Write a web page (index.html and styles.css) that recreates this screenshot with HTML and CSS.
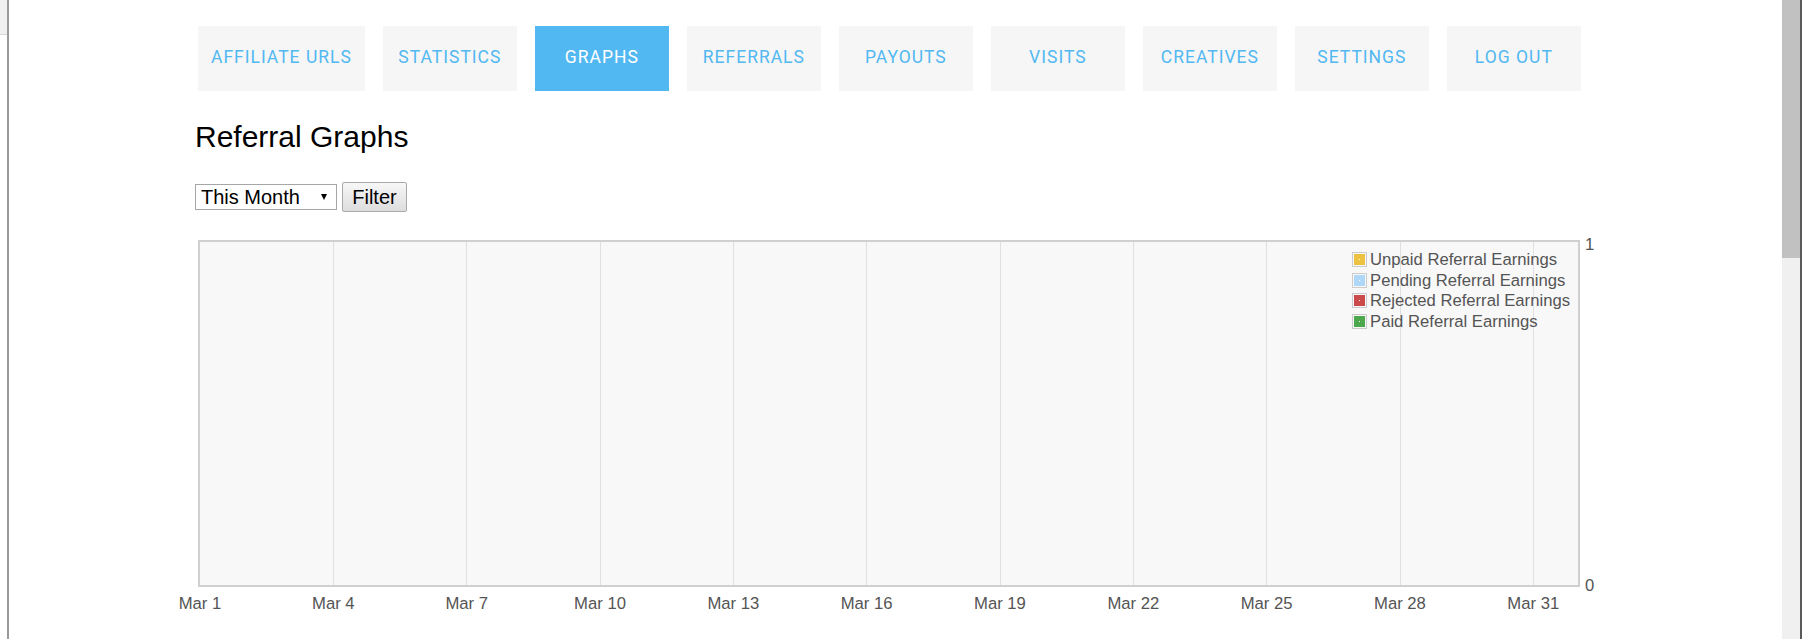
FILE: index.html
```html
<!DOCTYPE html>
<html lang="en">
<head>
<meta charset="utf-8">
<title>Referral Graphs</title>
<link rel="stylesheet" href="styles.css">
</head>
<body>
<div class="frame-left"><div class="frame-left-top"></div></div>
<main class="page">
  <nav class="tabs">
    <a class="tab" href="#">Affiliate URLs</a>
    <a class="tab" href="#">Statistics</a>
    <a class="tab tab-active" href="#">Graphs</a>
    <a class="tab" href="#">Referrals</a>
    <a class="tab" href="#">Payouts</a>
    <a class="tab" href="#">Visits</a>
    <a class="tab" href="#">Creatives</a>
    <a class="tab" href="#">Settings</a>
    <a class="tab" href="#">Log out</a>
  </nav>

  <h2 class="title">Referral Graphs</h2>

  <form class="filter">
    <span class="select-wrap">
      <select class="range">
        <option>This Month</option>
        <option>Last Month</option>
        <option>This Year</option>
      </select>
    </span>
    <button class="filter-btn" type="button">Filter</button>
  </form>

  <section class="chart">
    <div class="chart-row">
      <div class="plot">
        <svg class="grid" width="1378" height="343" viewBox="0 0 1378 343">
          <line x1="133.5" y1="0" x2="133.5" y2="343"/>
          <line x1="266.5" y1="0" x2="266.5" y2="343"/>
          <line x1="400.5" y1="0" x2="400.5" y2="343"/>
          <line x1="533.5" y1="0" x2="533.5" y2="343"/>
          <line x1="666.5" y1="0" x2="666.5" y2="343"/>
          <line x1="800.5" y1="0" x2="800.5" y2="343"/>
          <line x1="933.5" y1="0" x2="933.5" y2="343"/>
          <line x1="1066.5" y1="0" x2="1066.5" y2="343"/>
          <line x1="1200.5" y1="0" x2="1200.5" y2="343"/>
          <line x1="1333.5" y1="0" x2="1333.5" y2="343"/>
        </svg>
        <div class="legend">
          <div class="legend-row"><span class="swatch"><span class="swatch-fill swatch-unpaid"></span></span><span class="legend-label">Unpaid Referral Earnings</span></div>
          <div class="legend-row"><span class="swatch"><span class="swatch-fill swatch-pending"></span></span><span class="legend-label">Pending Referral Earnings</span></div>
          <div class="legend-row"><span class="swatch"><span class="swatch-fill swatch-rejected"></span></span><span class="legend-label">Rejected Referral Earnings</span></div>
          <div class="legend-row"><span class="swatch"><span class="swatch-fill swatch-paid"></span></span><span class="legend-label">Paid Referral Earnings</span></div>
        </div>
      </div>
      <div class="yaxis"><span>1</span><span>0</span></div>
    </div>
    <div class="xaxis">
      <span>Mar 1</span><span>Mar 4</span><span>Mar 7</span><span>Mar 10</span><span>Mar 13</span><span>Mar 16</span><span>Mar 19</span><span>Mar 22</span><span>Mar 25</span><span>Mar 28</span><span>Mar 31</span>
    </div>
  </section>
</main>
<div class="scrollbar"><div class="scroll-thumb"></div></div>
</body>
</html>
```

FILE: styles.css
```css
html, body {
  margin: 0;
  padding: 0;
  height: 639px;
  overflow: hidden;
  background: #ffffff;
}

body {
  display: flex;
  font-family: "Liberation Sans", Arial, sans-serif;
  color: #000;
}

.frame-left {
  width: 7px;
  flex: none;
  border-right: 2px solid #9a9a9a;
  background: #ffffff;
}

.frame-left-top {
  height: 34px;
  background: #f0f0f0;
  border-bottom: 1px solid #d6d6d6;
}

.page {
  flex: 1;
  padding: 26px 0 0 186px;
  min-width: 0;
}

/* navigation tabs */
.tabs {
  display: flex;
  gap: 18px;
  margin-left: 3px;
}

.tab {
  box-sizing: border-box;
  height: 65px;
  min-width: 134px;
  padding: 0 13px 3px;
  display: flex;
  align-items: center;
  justify-content: center;
  background: #f6f6f6;
  color: #52b8f2;
  font-family: Roboto, "Liberation Sans", sans-serif;
  font-size: 17.5px;
  letter-spacing: 1px;
  text-transform: uppercase;
  text-decoration: none;
  white-space: nowrap;
}

.tab-active {
  background: #52b8f2;
  color: #ffffff;
}

/* heading */
.title {
  margin: 29px 0 0;
  font-size: 30px;
  line-height: 34px;
  font-weight: normal;
  color: #000;
}

/* filter form */
.filter {
  margin: 28px 0 0;
  display: flex;
  align-items: center;
  gap: 5px;
  height: 30px;
}

.select-wrap {
  position: relative;
  display: block;
  width: 142px;
  height: 26px;
}

.select-wrap::after {
  content: "";
  position: absolute;
  right: 10px;
  top: 10px;
  border-left: 3.5px solid transparent;
  border-right: 3.5px solid transparent;
  border-top: 6px solid #000;
  pointer-events: none;
}

.range {
  -webkit-appearance: none;
  appearance: none;
  box-sizing: border-box;
  width: 142px;
  height: 26px;
  margin: 0;
  padding: 0 0 0 5px;
  border: 1px solid #a6a6a6;
  border-radius: 0;
  background: #ffffff;
  color: #000;
  font-family: "Liberation Sans", Arial, sans-serif;
  font-size: 20px;
  line-height: 24px;
}

.filter-btn {
  box-sizing: border-box;
  width: 65px;
  height: 30px;
  margin: 0;
  padding: 0;
  border: 1px solid #a9a9a9;
  border-radius: 2px;
  background: linear-gradient(#f7f7f7, #dddddd);
  color: #000;
  font-family: "Liberation Sans", Arial, sans-serif;
  font-size: 20px;
}

/* chart */
.chart {
  margin: 28px 0 0 3px;
  font-family: "Liberation Sans", Arial, sans-serif;
  font-size: 16.67px;
  line-height: 19px;
  color: #545454;
}

.chart-row {
  display: flex;
}

.plot {
  position: relative;
  width: 1378px;
  height: 343px;
  border: 2px solid #d0d0d0;
  background: #f8f8f8;
  flex: none;
}

.grid {
  display: block;
}

.grid line {
  stroke: #e0e0e0;
  stroke-width: 1;
}

.legend {
  position: absolute;
  top: 7px;
  right: 8px;
  display: flex;
  flex-direction: column;
}

.legend-row {
  display: flex;
  align-items: center;
  height: 20.8px;
  gap: 3px;
}

.swatch {
  display: block;
  border: 1px solid #cccccc;
  padding: 1px;
  background: #f8f8f8;
}

.swatch-fill {
  display: block;
  width: 1px;
  height: 1px;
  border: 5.5px solid #edc240;
  background: rgba(255, 255, 255, 0.55);
}

.swatch-unpaid { border-color: #edc240; }
.swatch-pending { border-color: #afd8f8; }
.swatch-rejected { border-color: #cb4b4b; }
.swatch-paid { border-color: #4da74d; }

.legend-label {
  white-space: nowrap;
  color: #545454;
}

.yaxis {
  display: flex;
  flex-direction: column;
  justify-content: space-between;
  margin: -5px 0 -8px;
  padding-left: 5px;
}

.xaxis {
  display: flex;
  margin: 7px 0 0 -64.67px;
}

.xaxis span {
  flex: none;
  width: 133.333px;
  text-align: center;
  white-space: nowrap;
}

/* window scrollbar */
.scrollbar {
  width: 18px;
  flex: none;
  background: #f0f0f0;
  border-right: 2px solid #5a5a5a;
}

.scroll-thumb {
  height: 258px;
  background: #c1c1c1;
}
```
